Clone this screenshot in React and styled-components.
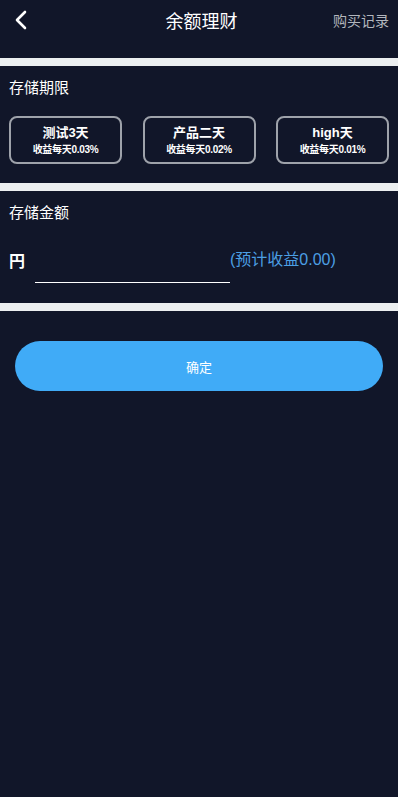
import React from "react";
import styled, { createGlobalStyle } from "styled-components";

const Global = createGlobalStyle`
  html, body { margin: 0; padding: 0; background: #111629; }
  body { font-family: "Noto Sans CJK SC", "Liberation Sans", sans-serif; }
  * { box-sizing: border-box; }
`;

const Page = styled.div`
  width: 398px;
  min-height: 797px;
  background: #111629;
  color: #fff;
  font-family: "Noto Sans CJK SC", sans-serif;
`;

const Header = styled.header`
  height: 58px;
  display: grid;
  grid-template-columns: 1fr auto 1fr;
  align-items: center;
  padding: 0 9px 0 14px;
`;

const Back = styled.button`
  justify-self: start;
  background: none;
  border: 0;
  padding: 0;
  width: 20px;
  height: 24px;
  margin-top: -19px;
  display: flex;
  align-items: center;
  color: #fff;
`;

const Title = styled.h1`
  margin: -19px 0 0;
  font-size: 18px;
  font-weight: 400;
  color: #fff;
`;

const Link = styled.span`
  justify-self: end;
  margin-top: -19px;
  font-size: 14px;
  color: #b3b6bd;
`;

const Divider = styled.div`
  height: 8px;
  background: #eceff0;
`;

const Section = styled.section`
  padding: ${(p) => p.$pad};
`;

const SectionTitle = styled.div`
  font-size: 15px;
  line-height: 20px;
  color: #fff;
`;

const Cards = styled.div`
  display: grid;
  grid-template-columns: repeat(3, 113px);
  justify-content: space-between;
  margin-top: 19px;
`;

const Card = styled.div`
  height: 48px;
  border: 2px solid #9ea2aa;
  border-radius: 8px;
  display: flex;
  flex-direction: column;
  align-items: center;
  justify-content: center;
  gap: 2px;
`;

const CardName = styled.div`
  font-size: 13px;
  font-weight: 700;
  line-height: 17px;
  font-family: "Liberation Sans", "Noto Sans CJK SC", sans-serif;
`;

const CardRate = styled.div`
  font-size: 10px;
  font-weight: 700;
  line-height: 13px;
  letter-spacing: -0.3px;
  font-family: "Liberation Sans", "Noto Sans CJK SC", sans-serif;
`;

const AmountRow = styled.div`
  display: flex;
  align-items: flex-start;
  margin-top: 24px;
`;

const Yen = styled.span`
  font-size: 16px;
  font-weight: 700;
  line-height: 28px;
  width: 26px;
`;

const Input = styled.input`
  width: 195px;
  height: 37px;
  background: transparent;
  border: 0;
  border-bottom: 1px solid #fff;
  outline: none;
  color: #fff;
  font-size: 15px;
  padding: 0;
`;

const Estimate = styled.span`
  font-size: 16px;
  line-height: 28px;
  color: #4c9fe4;
  font-family: "Liberation Sans", "Noto Sans CJK SC", sans-serif;
`;

const Submit = styled.button`
  display: block;
  margin: 30px auto 0;
  width: 368px;
  height: 50px;
  border: 0;
  border-radius: 25px;
  background: #40abf7;
  color: #fff;
  font-size: 13px;
  font-family: "Noto Sans CJK SC", sans-serif;
`;

const products = [
  { name: "测试3天", rate: "收益每天0.03%" },
  { name: "产品二天", rate: "收益每天0.02%" },
  { name: "high天", rate: "收益每天0.01%" },
];

export default function App() {
  return (
    <Page>
      <Global />
      <Header>
        <Back aria-label="back">
          <svg width="14" height="20" viewBox="0 0 14 20">
            <path d="M11 2 L3 10 L11 18" fill="none" stroke="#fff" strokeWidth="2.6" strokeLinecap="round" strokeLinejoin="round" />
          </svg>
        </Back>
        <Title>余额理财</Title>
        <Link>购买记录</Link>
      </Header>
      <Divider />
      <Section $pad="11px 9px 19px">
        <SectionTitle>存储期限</SectionTitle>
        <Cards>
          {products.map((p) => (
            <Card key={p.name}>
              <CardName>{p.name}</CardName>
              <CardRate>{p.rate}</CardRate>
            </Card>
          ))}
        </Cards>
      </Section>
      <Divider />
      <Section $pad="11px 9px 20px">
        <SectionTitle>存储金额</SectionTitle>
        <AmountRow>
          <Yen>円</Yen>
          <Input />
          <Estimate>(预计收益0.00)</Estimate>
        </AmountRow>
      </Section>
      <Divider />
      <Submit>确定</Submit>
    </Page>
  );
}
